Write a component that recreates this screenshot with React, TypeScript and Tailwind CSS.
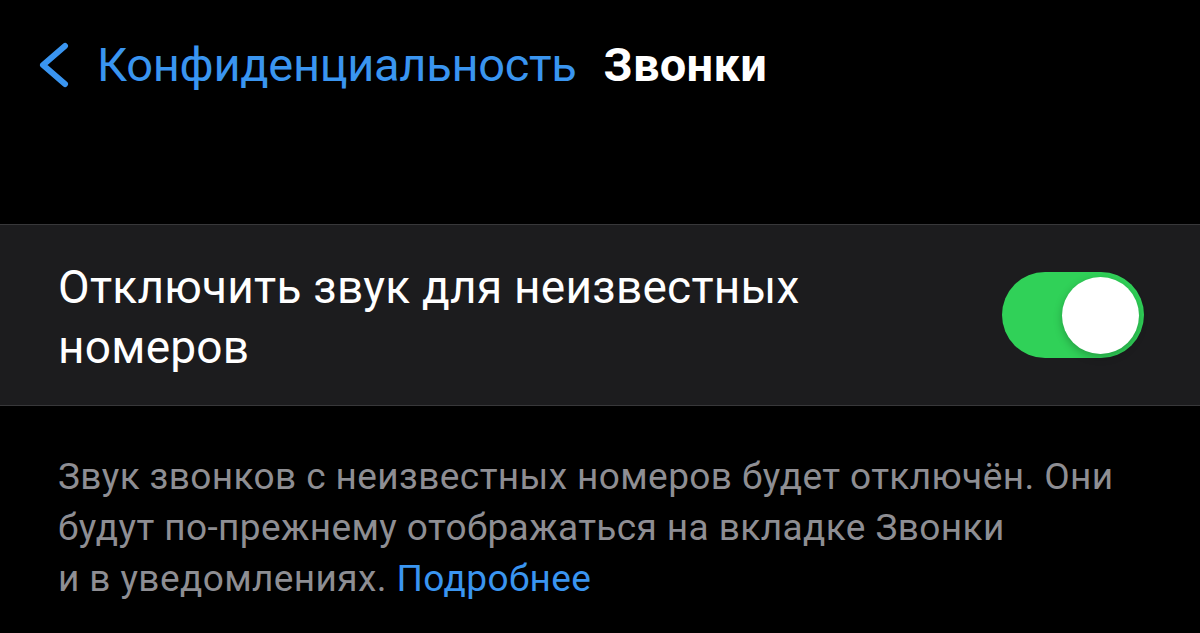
const font = { fontFamily: 'Roboto, "Liberation Sans", sans-serif' };

function BackChevron() {
  return (
    <svg width="34" height="46" viewBox="0 0 34 46" fill="none" className="shrink-0">
      <polyline
        points="29,4 7,23 29,42"
        stroke="#3a95f0"
        strokeWidth="6"
        strokeLinecap="round"
        strokeLinejoin="round"
      />
    </svg>
  );
}

function Toggle({ on }: { on: boolean }) {
  return (
    <div
      className={`w-[142px] h-[86px] rounded-full p-[5px] flex items-center ${
        on ? 'bg-[#30d158] justify-end' : 'bg-[#39393d] justify-start'
      }`}
    >
      <div className="w-[77px] h-[77px] rounded-full bg-white shadow-[0_3px_8px_rgba(0,0,0,0.25)]" />
    </div>
  );
}

export default function App() {
  return (
    <div className="w-[1200px] h-[633px] bg-black overflow-hidden" style={font}>
      {/* Nav bar */}
      <div className="flex items-center h-[89px] pt-[40px] pl-[36px]">
        <BackChevron />
        <span className="text-[#3a95f0] text-[47px] ml-[27px] leading-none tracking-[-0.3px]">
          Конфиденциальность
        </span>
        <span className="text-white text-[47px] font-bold ml-[27px] leading-none tracking-[0.3px]">
          Звонки
        </span>
      </div>

      {/* Settings cell */}
      <div className="mt-[135px] bg-[#1c1c1e] border-y border-[#38383a] h-[182px] flex items-center justify-between pl-[58px] pr-[56px]">
        <div className="text-white text-[46px] leading-[60px] tracking-[0.25px] w-[820px] mt-[4px]">
          Отключить звук для неизвестных номеров
        </div>
        <Toggle on />
      </div>

      {/* Footer note */}
      <div className="pl-[58px] pt-[45px] text-[#8e8e93] text-[37px] leading-[51px] tracking-[0.4px]">
        Звук звонков с неизвестных номеров будет отключён. Они
        <br />
        будут по-прежнему отображаться на вкладке Звонки
        <br />
        и в уведомлениях. <span className="text-[#3a95f0]">Подробнее</span>
      </div>
    </div>
  );
}
